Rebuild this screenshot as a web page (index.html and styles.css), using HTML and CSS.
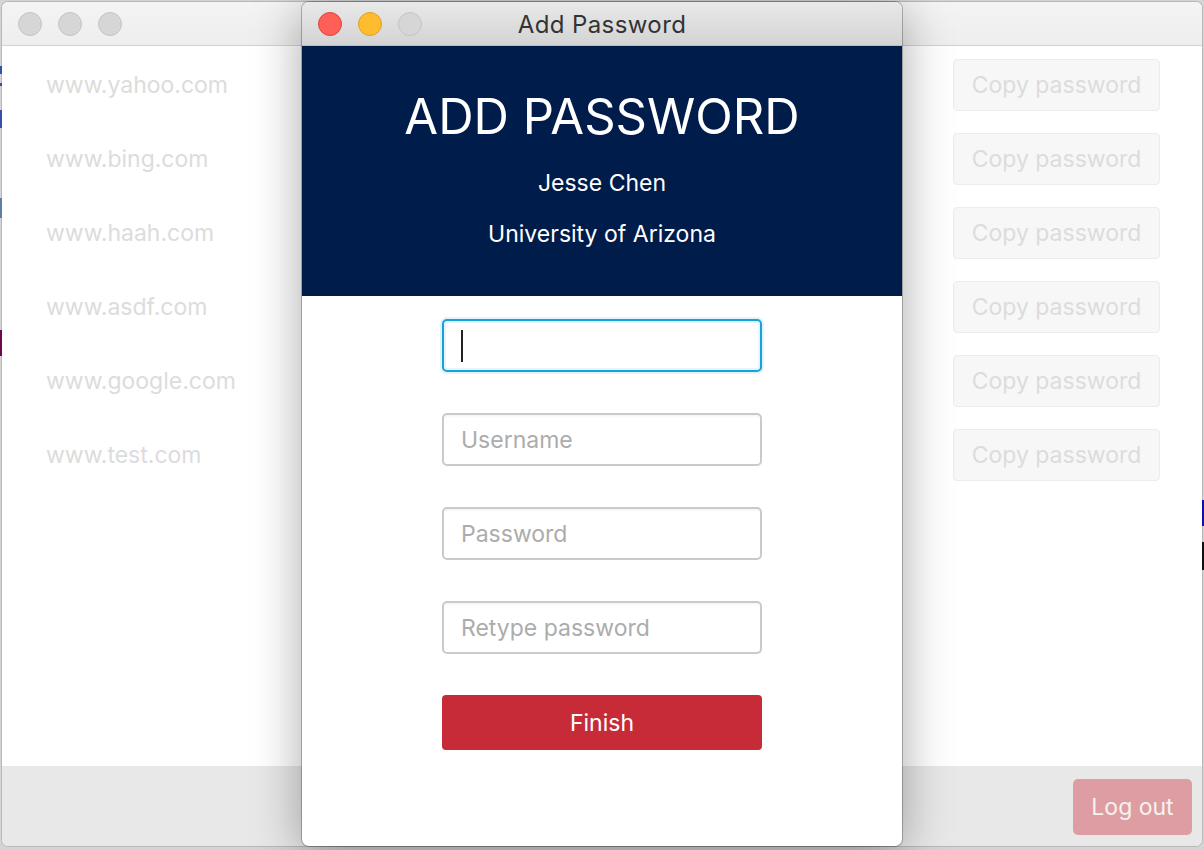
FILE: index.html
```html
<!DOCTYPE html>
<html>
<head>
<meta charset="utf-8">
<link rel="stylesheet" href="styles.css">
</head>
<body>
<div class="desktop">
  <div class="edge-marks">
    <span class="mark m1"></span><span class="mark m2"></span><span class="mark m3"></span><span class="mark m4"></span><span class="mark m5"></span>
    <span class="mark r1"></span><span class="mark r2"></span>
  </div>
  <div class="window main-window">
    <div class="titlebar">
      <div class="lights">
        <span class="light gray"></span><span class="light gray"></span><span class="light gray"></span>
      </div>
    </div>
    <div class="content">
      <div class="row"><span class="site">www.yahoo.com</span><button class="copy">Copy password</button></div>
      <div class="row"><span class="site">www.bing.com</span><button class="copy">Copy password</button></div>
      <div class="row"><span class="site">www.haah.com</span><button class="copy">Copy password</button></div>
      <div class="row"><span class="site">www.asdf.com</span><button class="copy">Copy password</button></div>
      <div class="row"><span class="site">www.google.com</span><button class="copy">Copy password</button></div>
      <div class="row"><span class="site">www.test.com</span><button class="copy">Copy password</button></div>
    </div>
    <div class="footer">
      <button class="logout">Log out</button>
    </div>
  </div>

  <div class="window dialog">
    <div class="titlebar dialog-titlebar">
      <div class="lights">
        <span class="light red"></span><span class="light yellow"></span><span class="light gray"></span>
      </div>
      <div class="title">Add Password</div>
    </div>
    <div class="header">
      <h1 class="heading">ADD PASSWORD</h1>
      <p class="sub">Jesse Chen</p>
      <p class="sub">University of Arizona</p>
    </div>
    <div class="form">
      <div class="field focused"><span class="caret"></span></div>
      <div class="field"><span class="placeholder">Username</span></div>
      <div class="field"><span class="placeholder">Password</span></div>
      <div class="field"><span class="placeholder">Retype password</span></div>
      <button class="finish">Finish</button>
    </div>
  </div>
</div>
</body>
</html>
```

FILE: styles.css
```css
* { box-sizing: border-box; }
html, body {
  margin: 0;
  padding: 0;
}
body {
  width: 1204px;
  height: 850px;
  overflow: hidden;
  background: #d4d4d4;
  font-family: Inter, "Liberation Sans", sans-serif;
}
.desktop {
  position: relative;
  width: 1204px;
  height: 850px;
  padding: 2px;
}
.edge-marks .mark {
  position: absolute;
  width: 2px;
}
.m1 { left: 0; top: 66px; height: 8px; background: #3450a8; }
.m2 { left: 0; top: 83px; height: 3px; background: #3450a8; }
.m3 { left: 0; top: 110px; height: 18px; background: #3450a8; }
.m4 { left: 0; top: 198px; height: 20px; background: #5f7fa0; }
.m5 { left: 0; top: 330px; height: 26px; background: #6a0a4a; }
.r1 { right: 0; top: 500px; height: 26px; background: #1010b0; }
.r2 { right: 0; top: 542px; height: 28px; background: #111; }

.window {
  border-radius: 6px;
  overflow: hidden;
}
.main-window {
  width: 1200px;
  height: 844px;
  display: flex;
  flex-direction: column;
  background: #fff;
  box-shadow: 0 0 0 1px #b8b8b8;
}
.titlebar {
  height: 44px;
  flex: none;
  background: linear-gradient(#f4f4f4, #eeeeee);
  border-bottom: 1px solid #d2d2d2;
  display: flex;
  align-items: center;
  position: relative;
}
.lights {
  display: flex;
  gap: 16px;
  padding-left: 16px;
}
.light {
  width: 24px;
  height: 24px;
  border-radius: 50%;
  display: block;
}
.light.gray { background: #d6d6d6; border: 1px solid #c4c4c4; }
.light.red { background: #fe5f57; border: 1px solid #e0443e; }
.light.yellow { background: #febc2e; border: 1px solid #dea123; }

.content {
  flex: 1;
  padding: 13px 42px 0 44px;
  display: flex;
  flex-direction: column;
  gap: 22px;
}
.row {
  height: 52px;
  display: flex;
  align-items: center;
  justify-content: space-between;
}
.site {
  font-size: 23px;
  color: #dcdcdc;
}
.copy {
  width: 207px;
  height: 52px;
  border: 1px solid #ececec;
  border-radius: 4px;
  background: #f7f7f7;
  color: #dcdcdc;
  font-family: inherit;
  font-size: 23px;
  padding: 0;
}
.footer {
  height: 80px;
  flex: none;
  background: #e8e8e8;
  display: flex;
  justify-content: flex-end;
  padding: 13px 10px 0 0;
}
.logout {
  width: 119px;
  height: 56px;
  border: none;
  border-radius: 5px;
  background: #de9da3;
  color: #f6f2ee;
  font-family: inherit;
  font-size: 23px;
  padding: 0;
}

.dialog {
  position: absolute;
  left: 302px;
  top: 2px;
  width: 600px;
  height: 844px;
  background: #fff;
  border-radius: 7px;
  box-shadow: 0 0 0 1px rgba(0,0,0,0.25), 0 8px 50px rgba(0,0,0,0.35);
  display: flex;
  flex-direction: column;
}
.dialog-titlebar {
  background: linear-gradient(#e9e9e9, #d3d3d3);
  border-bottom: 1px solid #bdbdbd;
}
.title {
  position: absolute;
  left: 0;
  right: 0;
  top: 0;
  bottom: 0;
  display: flex;
  align-items: center;
  justify-content: center;
  font-size: 24px;
  letter-spacing: 0.4px;
  color: #333;
  padding-top: 2px;
  pointer-events: none;
}
.header {
  height: 250px;
  flex: none;
  background: #001c4a;
  color: #fff;
  text-align: center;
  padding-top: 41px;
}
.heading {
  margin: 0;
  font-weight: 400;
  font-size: 49px;
  line-height: 60px;
}
.sub {
  margin: 0;
  font-size: 23px;
  line-height: 26px;
}
.heading + .sub { margin-top: 23px; }
.sub + .sub { margin-top: 25px; }

.form {
  display: flex;
  flex-direction: column;
  align-items: center;
  padding-top: 23px;
  gap: 41px;
}
.field {
  width: 320px;
  height: 53px;
  border: 2px solid #cacaca;
  border-radius: 5px;
  display: flex;
  align-items: center;
  padding-left: 17px;
  background: #fff;
  box-shadow: inset 0 3px 3px -2px rgba(0,0,0,0.06);
}
.field.focused {
  border-color: #14a2d9;
  box-shadow: 0 0 0 2px #e2f2fa, inset 0 0 0 2px #e6f4fb;
}
.caret {
  width: 2px;
  height: 32px;
  background: #222;
}
.placeholder {
  font-size: 23px;
  color: #acacac;
}
.finish {
  width: 320px;
  height: 55px;
  border: none;
  border-radius: 4px;
  background: #c82b38;
  color: #fff;
  font-family: inherit;
  font-size: 23px;
  padding: 0;
}
```
